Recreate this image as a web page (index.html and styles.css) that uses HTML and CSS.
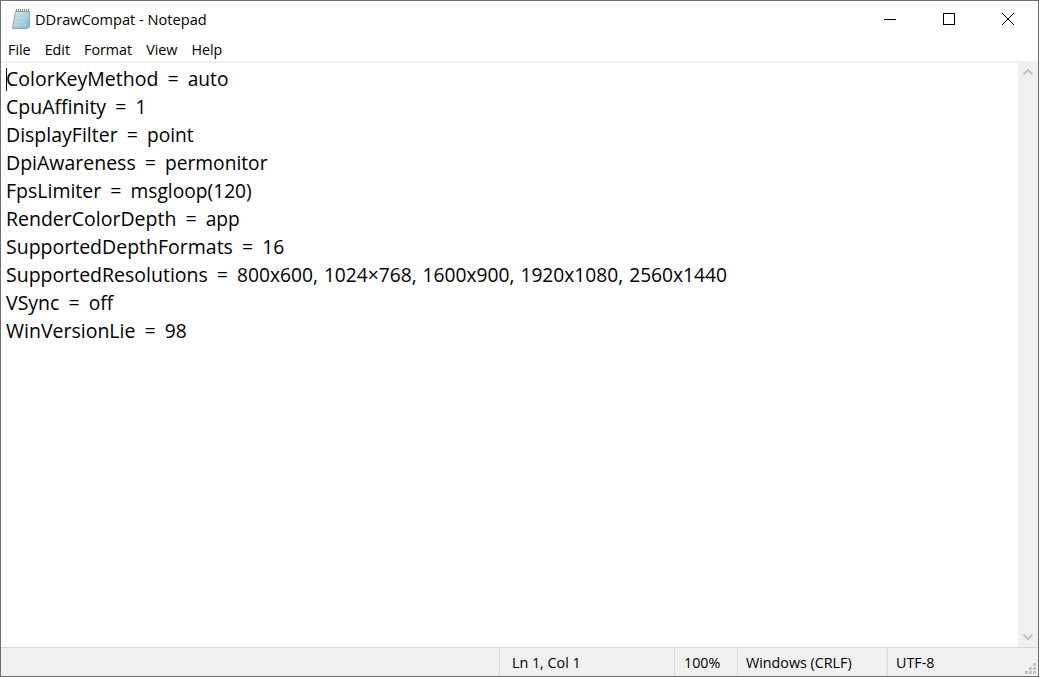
FILE: index.html
```html
<!DOCTYPE html>
<html lang="en">
<head>
<meta charset="utf-8">
<title>DDrawCompat - Notepad</title>
<link rel="stylesheet" href="styles.css">
</head>
<body>
<div class="window">
  <header class="titlebar">
    <svg class="app-icon" width="20" height="22" viewBox="0 0 20 22">
      <defs><linearGradient id="pg" x1="0" y1="0" x2="1" y2="1"><stop offset="0" stop-color="#d8edf4"/><stop offset="1" stop-color="#7db5c9"/></linearGradient></defs>
      <path d="M4.5 3.5H18.5V19L16 20.5H1.5Z" fill="url(#pg)" stroke="#8fa6ae" stroke-width="1"/>
      <path d="M5 2.5H18" stroke="#7d8a90" stroke-width="3" stroke-dasharray="1 1"/>
      <path d="M4 8H17M3.5 11H16.5M3 14H16M2.6 17H15.5" stroke="#b4d8e4" stroke-width="1"/>
    </svg>
    <span class="title">DDrawCompat - Notepad</span>
    <div class="controls">
      <button class="ctl"><svg width="12" height="12" viewBox="0 0 12 12"><path d="M0 6.5H12" stroke="#000" stroke-width="1"/></svg></button>
      <button class="ctl"><svg width="12" height="12" viewBox="0 0 12 12"><rect x="0.5" y="0.5" width="11" height="11" fill="none" stroke="#000"/></svg></button>
      <button class="ctl"><svg width="12" height="12" viewBox="0 0 12 12"><path d="M0 0L12 12M12 0L0 12" stroke="#000" stroke-width="1"/></svg></button>
    </div>
  </header>
  <nav class="menubar">
    <span class="menu">File</span><span class="menu">Edit</span><span class="menu">Format</span><span class="menu">View</span><span class="menu">Help</span>
  </nav>
  <main class="editor">
    <div class="text">
      <div class="line"><span class="caret"></span><span class="k">ColorKeyMethod</span> = <span class="v">auto</span></div>
      <div class="line"><span class="k">CpuAffinity</span> = <span class="v">1</span></div>
      <div class="line"><span class="k">DisplayFilter</span> = <span class="v">point</span></div>
      <div class="line"><span class="k">DpiAwareness</span> = <span class="v">permonitor</span></div>
      <div class="line"><span class="k">FpsLimiter</span> = <span class="v">msgloop(120)</span></div>
      <div class="line"><span class="k">RenderColorDepth</span> = <span class="v">app</span></div>
      <div class="line"><span class="k">SupportedDepthFormats</span> = <span class="v">16</span></div>
      <div class="line"><span class="k">SupportedResolutions</span> = <span class="v">800x600, 1024×768, 1600x900, 1920x1080, 2560x1440</span></div>
      <div class="line"><span class="k">VSync</span> = <span class="v">off</span></div>
      <div class="line"><span class="k">WinVersionLie</span> = <span class="v">98</span></div>
    </div>
    <aside class="scrollbar">
      <svg width="12" height="8" viewBox="0 0 12 8"><path d="M1.5 6.5L6 2L10.5 6.5" fill="none" stroke="#c2c2c2" stroke-width="2"/></svg>
      <svg width="12" height="8" viewBox="0 0 12 8"><path d="M1.5 1.5L6 6L10.5 1.5" fill="none" stroke="#c2c2c2" stroke-width="2"/></svg>
    </aside>
  </main>
  <footer class="statusbar">
    <div class="cell spacer"></div>
    <div class="cell pos">Ln 1, Col 1</div>
    <div class="cell zoom">100%</div>
    <div class="cell eol">Windows (CRLF)</div>
    <div class="cell enc">UTF-8</div>
    <svg class="grip" width="12" height="12" viewBox="0 0 12 12" fill="#c4c4c4">
      <rect x="8" y="0" width="3" height="3"/>
      <rect x="4" y="4" width="3" height="3"/><rect x="8" y="4" width="3" height="3"/>
      <rect x="0" y="8" width="3" height="3"/><rect x="4" y="8" width="3" height="3"/><rect x="8" y="8" width="3" height="3"/>
    </svg>
  </footer>
</div>
</body>
</html>
```
FILE: styles.css
```css
* { box-sizing: border-box; }
html, body { margin: 0; padding: 0; background: #fff; }
body { width: 1039px; height: 677px; overflow: hidden; font-family: "Open Sans", "Noto Sans", sans-serif; color: #000; }
.window { width: 1039px; height: 677px; display: flex; flex-direction: column; border: 1px solid #6e6e6e; background: #fff; }
.titlebar { height: 35px; flex: none; display: flex; align-items: center; padding-left: 10px; }
.app-icon { flex: none; margin-right: 4px; }
.title { font-size: 14.6px; color: #000; }
.controls { margin-left: auto; display: flex; margin-right: 1px; }
.ctl { width: 59px; height: 35px; border: 0; background: none; padding: 0; display: flex; align-items: center; justify-content: center; }
.menubar { height: 25px; flex: none; display: flex; align-items: center; padding: 2px 0 0 7px; gap: 14px; font-size: 14.3px; }
.editor { flex: 1; min-height: 0; display: flex; border-top: 2px solid #f0f0f0; }
.text { flex: 1; padding: 2px 0 0 5px; font-size: 19.5px; word-spacing: 4px; }
.line { height: 28px; line-height: 28px; white-space: pre; position: relative; }
.v { font-size: 19.2px; word-spacing: 1px; }
.caret { position: absolute; left: 0; top: 3px; width: 1px; height: 23px; background: #000; }
.scrollbar { width: 20px; flex: none; background: #f0f0f0; display: flex; flex-direction: column; justify-content: space-between; align-items: center; padding: 7px 0 6px; margin-top: -2px; }
.statusbar { height: 29px; flex: none; display: flex; align-items: center; background: #f0f0f0; border-top: 1px solid #d4d4d4; font-size: 14.3px; position: relative; }
.cell { height: 100%; display: flex; align-items: center; padding-left: 12px; border-left: 1px solid #dadada; }
.spacer { width: 498px; border-left: 0; }
.pos { width: 175px; }
.zoom { width: 63px; padding-left: 9px; }
.eol { width: 150px; padding-left: 8px; }
.enc { padding-left: 8px; }
.grip { position: absolute; right: 1px; bottom: 1px; }
```
